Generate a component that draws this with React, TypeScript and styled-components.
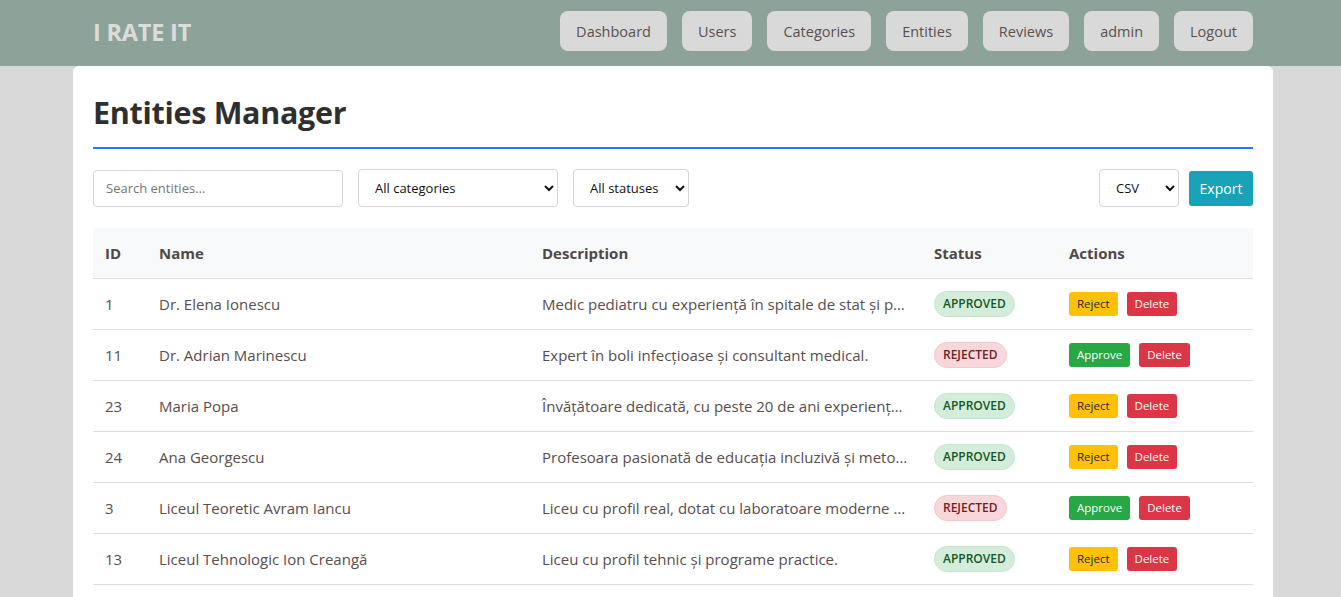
import React from "react";
import styled, { createGlobalStyle } from "styled-components";

const GlobalStyle = createGlobalStyle`
  html, body { margin: 0; padding: 0; }
  body {
    background: #d9d9d9;
    font-family: "Open Sans", "Noto Sans", Arial, sans-serif;
    color: #333;
  }
  * { box-sizing: border-box; }
`;

const NavBar = styled.header`
  height: 66px;
  background: #8da399;
  display: flex;
  align-items: center;
  justify-content: space-between;
  padding: 0 88px 4px 93px;
`;

const Logo = styled.div`
  font-size: 23.5px;
  font-weight: 700;
  color: #dcdcdc;
  letter-spacing: -0.2px;
  margin-top: 1px;
`;

const NavLinks = styled.nav`
  display: flex;
  gap: 15px;
  align-items: center;
`;

const NavButton = styled.button`
  height: 40px;
  padding: 0 16px;
  border: none;
  border-radius: 8px;
  background: #d9d9d9;
  color: #5b5050;
  font-family: inherit;
  font-size: 14.5px;
  cursor: pointer;
`;

const Card = styled.main`
  width: 1200px;
  margin: 0 0 0 73px;
  background: #fff;
  border-radius: 6px 6px 0 0;
  padding: 20px 20px 40px;
  min-height: 600px;
`;

const Title = styled.h1`
  margin: 5px 0 0;
  font-size: 30.5px;
  font-weight: 700;
  color: #2f2f2f;
  padding-bottom: 14px;
  border-bottom: 2px solid #1a7ff0;
  letter-spacing: -0.3px;
`;

const Toolbar = styled.div`
  display: flex;
  align-items: center;
  gap: 15px;
  margin-top: 20px;
`;

const SearchInput = styled.input`
  width: 250px;
  height: 37px;
  border: 1px solid #d6d6d6;
  border-radius: 4px;
  padding: 0 12px;
  font-family: inherit;
  font-size: 13px;
  color: #333;
  &::placeholder { color: #757575; }
`;

const Select = styled.select<{ $w: number }>`
  width: ${(p) => p.$w}px;
  height: 38px;
  border: 1px solid #d6d6d6;
  border-radius: 4px;
  padding: 0 4px 0 12px;
  background: #fff;
  font-family: inherit;
  font-size: 13px;
  color: #111;
`;

const Spacer = styled.div`
  flex: 1;
`;

const ExportButton = styled.button`
  height: 35px;
  width: 64px;
  padding: 0;
  border: none;
  border-radius: 3px;
  background: #17a2b8;
  color: #fff;
  font-family: inherit;
  font-size: 14px;
  margin-left: -5px;
`;

const Table = styled.table`
  width: 100%;
  margin-top: 21px;
  border-collapse: collapse;
  table-layout: fixed;
  font-size: 15px;
`;

const HeadRow = styled.tr`
  background: #f8f9fa;
`;

const Th = styled.th`
  height: 50px;
  text-align: left;
  padding: 0 12px;
  font-weight: 700;
  color: #4f4848;
  border-bottom: 1px solid #dedede;
`;

const Td = styled.td`
  height: 51px;
  padding: 0 12px;
  color: #5a4d4d;
  border-bottom: 1px solid #dedede;
  white-space: nowrap;
  overflow: hidden;
  text-overflow: ellipsis;
`;

const Badge = styled.span<{ $status: "APPROVED" | "REJECTED" }>`
  display: inline-block;
  padding: 4px 8px;
  border-radius: 13px;
  font-size: 12px;
  font-weight: 600;
  line-height: 16px;
  background: ${(p) => (p.$status === "APPROVED" ? "#d4edda" : "#f8d7da")};
  border: 1px solid ${(p) => (p.$status === "APPROVED" ? "#c3e6cb" : "#f5c6cb")};
  color: ${(p) => (p.$status === "APPROVED" ? "#155724" : "#721c24")};
`;

const Actions = styled.div`
  display: flex;
  gap: 9px;
  align-items: center;
`;

const variants = {
  reject: { bg: "#ffc107", fg: "#212529" },
  approve: { bg: "#28a745", fg: "#fff" },
  delete: { bg: "#dc3545", fg: "#fff" },
};

const ActionButton = styled.button<{ $variant: keyof typeof variants }>`
  height: 24px;
  padding: 0 8px;
  border: none;
  border-radius: 3px;
  font-family: inherit;
  font-size: 11.5px;
  background: ${(p) => variants[p.$variant].bg};
  color: ${(p) => variants[p.$variant].fg};
`;

type Row = {
  id: number;
  name: string;
  description: string;
  status: "APPROVED" | "REJECTED";
};

const rows: Row[] = [
  { id: 1, name: "Dr. Elena Ionescu", description: "Medic pediatru cu experiență în spitale de stat și private din București.", status: "APPROVED" },
  { id: 11, name: "Dr. Adrian Marinescu", description: "Expert în boli infecțioase și consultant medical.", status: "REJECTED" },
  { id: 23, name: "Maria Popa", description: "Învățătoare dedicată, cu peste 20 de ani experiență la catedră.", status: "APPROVED" },
  { id: 24, name: "Ana Georgescu", description: "Profesoara pasionată de educația incluzivă și metode moderne.", status: "APPROVED" },
  { id: 3, name: "Liceul Teoretic Avram Iancu", description: "Liceu cu profil real, dotat cu laboratoare moderne și bibliotecă.", status: "REJECTED" },
  { id: 13, name: "Liceul Tehnologic Ion Creangă", description: "Liceu cu profil tehnic și programe practice.", status: "APPROVED" },
];

export default function App() {
  return (
    <>
      <GlobalStyle />
      <NavBar>
        <Logo>I RATE IT</Logo>
        <NavLinks>
          {["Dashboard", "Users", "Categories", "Entities", "Reviews", "admin", "Logout"].map((l) => (
            <NavButton key={l}>{l}</NavButton>
          ))}
        </NavLinks>
      </NavBar>
      <Card>
        <Title>Entities Manager</Title>
        <Toolbar>
          <SearchInput placeholder="Search entities..." />
          <Select $w={200} defaultValue="all">
            <option value="all">All categories</option>
          </Select>
          <Select $w={116} defaultValue="all">
            <option value="all">All statuses</option>
          </Select>
          <Spacer />
          <Select $w={80} defaultValue="csv">
            <option value="csv">CSV</option>
          </Select>
          <ExportButton>Export</ExportButton>
        </Toolbar>
        <Table>
          <colgroup>
            <col style={{ width: 54 }} />
            <col style={{ width: 383 }} />
            <col style={{ width: 392 }} />
            <col style={{ width: 135 }} />
            <col />
          </colgroup>
          <thead>
            <HeadRow>
              <Th>ID</Th>
              <Th>Name</Th>
              <Th>Description</Th>
              <Th>Status</Th>
              <Th>Actions</Th>
            </HeadRow>
          </thead>
          <tbody>
            {rows.map((r) => (
              <tr key={r.id}>
                <Td>{r.id}</Td>
                <Td>{r.name}</Td>
                <Td>{r.description}</Td>
                <Td>
                  <Badge $status={r.status}>{r.status}</Badge>
                </Td>
                <Td>
                  <Actions>
                    {r.status === "APPROVED" ? (
                      <ActionButton $variant="reject">Reject</ActionButton>
                    ) : (
                      <ActionButton $variant="approve">Approve</ActionButton>
                    )}
                    <ActionButton $variant="delete">Delete</ActionButton>
                  </Actions>
                </Td>
              </tr>
            ))}
          </tbody>
        </Table>
      </Card>
    </>
  );
}
